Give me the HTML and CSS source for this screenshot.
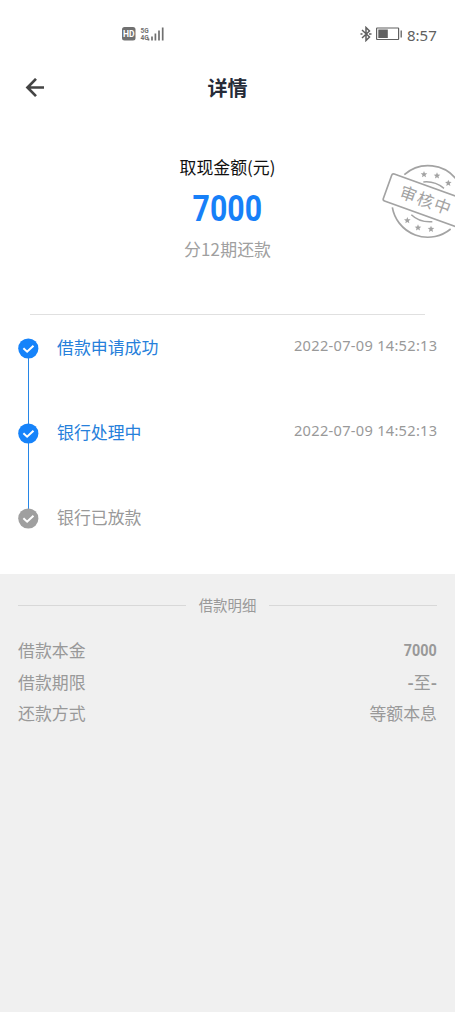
FILE: index.html
```html
<!DOCTYPE html>
<html lang="zh-CN">
<head>
<meta charset="utf-8">
<meta name="viewport" content="width=device-width">
<title>详情</title>
<link rel="stylesheet" href="styles.css">
</head>
<body>
<header class="status">
  <svg class="status-signal" width="44" height="16" viewBox="0 0 44 16">
    <rect x="0" y="1" width="13.500" height="13.500" rx="2.500" fill="#707070"/>
    <text x="6.700" y="11" class="hd" text-anchor="middle">HD</text>
    <text x="18.500" y="6.700" class="net">5G</text>
    <text x="18.500" y="13.800" class="net">4G</text>
    <path d="M26.500 12.500v2M30 10.500v4M33.400 7.500v7M37 4.500v10M40.700 1.500v13" stroke="#707070" stroke-width="1.700" fill="none"/>
  </svg>
  <div class="status-right">
    <svg width="44" height="16" viewBox="0 0 44 16" fill="none" stroke="#606060">
      <path d="M2 4l7.500 7-3.500 3.500v-13l3.500 3.500-7.500 7M.5 8h2M9 8h2.500" stroke-width="1.500"/>
      <rect x="16.600" y="2" width="22" height="11.500" rx=".5" stroke-width="1.200"/>
      <rect x="18.300" y="3.500" width="9.500" height="8.500" fill="#606060" stroke="none"/>
      <path d="M41.200 4.500v7" stroke-width="1.300"/>
    </svg>
    <span class="clock">8:57</span>
  </div>
</header>
<nav class="nav">
  <svg class="back" width="20" height="20" viewBox="0 0 20 20" fill="none" stroke="#444" stroke-width="2.700"><path d="M19 9.500H3M11 .9L2.500 9.500l8.500 8.600"/></svg>
  <h1 class="title">详情</h1>
</nav>
<main>
  <section class="hero">
    <p class="label">取现金额(元)</p>
    <p class="amount"><span>7000</span></p>
    <p class="terms">分<span class="terms-num">12</span>期还款</p>
    <svg class="stamp" width="85" height="100" viewBox="0 0 255 300" fill="none" stroke="#a3a3a3" stroke-width="5">
      <defs><path id="star" d="M0-10l2.700 6.600 7.200.5-5.500 4.600 1.700 7L0 5l-6.100 3.700 1.700-7-5.500-4.600 7.200-.5z" fill="#a3a3a3" stroke="none"/></defs>
      <path d="M103 74A108 108 0 0 1 262 92M67 172A108 108 0 0 0 242 237"/>
      <path d="M160 96Q193 92 222 115M124 194Q149 218 187 215" stroke-width="4.500"/>
      <rect x="-128" y="-43" width="256" height="86" rx="6" transform="translate(173 154) rotate(19.800)"/>
      <use href="#star" x="162" y="73"/><use href="#star" x="201" y="77"/><use href="#star" x="235" y="99"/>
      <use href="#star" x="112" y="211"/><use href="#star" x="144" y="233"/><use href="#star" x="183" y="237"/>
      <text class="stamp-text" transform="translate(166 151) rotate(19.800)" x="-79" y="18">审核中</text>
    </svg>
  </section>
  <ol class="steps">
    <li class="step done">
      <svg class="dot" width="21" height="21" viewBox="0 0 21 21"><circle cx="10.300" cy="10.500" r="10.100"/><path d="M5.400 10.300l3.700 3.400 6.400-6"/></svg>
      <span class="name">借款申请成功</span><time class="time">2022-07-09 14:52:13</time>
    </li>
    <li class="step done">
      <svg class="dot" width="21" height="21" viewBox="0 0 21 21"><circle cx="10.300" cy="10.500" r="10.100"/><path d="M5.400 10.300l3.700 3.400 6.400-6"/></svg>
      <span class="name">银行处理中</span><time class="time">2022-07-09 14:52:13</time>
    </li>
    <li class="step">
      <svg class="dot" width="21" height="21" viewBox="0 0 21 21"><circle cx="10.300" cy="10.500" r="10.100"/><path d="M5.400 10.300l3.700 3.400 6.400-6"/></svg>
      <span class="name">银行已放款</span>
    </li>
  </ol>
  <section class="details">
    <h2 class="divider"><span>借款明细</span></h2>
    <dl class="rows">
      <div class="row"><dt>借款本金</dt><dd class="number">7000</dd></div>
      <div class="row"><dt>借款期限</dt><dd><b>-</b>至<b>-</b></dd></div>
      <div class="row"><dt>还款方式</dt><dd>等额本息</dd></div>
    </dl>
  </section>
</main>
</body>
</html>
```
FILE: styles.css
```css
* { box-sizing: border-box; margin: 0; padding: 0; }
body {
  min-height: 1012px;
  display: flex;
  flex-direction: column;
  background: #fff;
  color: #999;
  font-family: "Noto Sans CJK SC", sans-serif;
  font-size: 16.9px;
  overflow-x: hidden;
}
svg { display: block; flex: none; }
.status {
  height: 68px;
  display: flex;
  justify-content: space-between;
  align-items: center;
  padding: 0 18px 0 122px;
}
.hd { font: bold 8.5px Roboto, sans-serif; fill: #fff; }
.net { font: bold 6.5px Roboto, sans-serif; fill: #707070; }
.status-right { display: flex; align-items: center; gap: 4px; }
.status-right svg { margin-right: -1px; }
.clock { font: 15px/20px "Noto Sans", sans-serif; color: #606060; width: 30px; padding-top: 1px; white-space: nowrap; }
.nav {
  height: 40px;
  display: grid;
  grid-template-columns: 1fr auto 1fr;
  align-items: center;
}
.back { margin-left: 25px; }
.title { font-size: 20px; line-height: 30px; font-weight: 700; color: #262b38; }
main { flex: 1; display: flex; flex-direction: column; }
.hero {
  position: relative;
  height: 207px;
  margin: 0 30px;
  padding-top: 46px;
  border-bottom: 1px solid #e0e0e0;
  text-align: center;
}
.label { color: #111; line-height: 26px; }
.amount { height: 56px; font: bold 36px/58px Roboto, sans-serif; color: #1780f8; }
.amount span { display: inline-block; transform: scaleX(.84); }
.terms { line-height: 26px; color: #a0a0a0; }
.terms-num { letter-spacing: .3px; }
.stamp { position: absolute; top: 42px; right: -30px; }
.stamp-text { font: 50px "Noto Sans CJK SC", sans-serif; letter-spacing: 4px; fill: #a3a3a3; stroke: none; }
.steps { list-style: none; padding: 22px 18px 0; height: 259px; }
.step {
  position: relative;
  height: 85px;
  display: flex;
  align-items: flex-start;
}
.dot { margin-top: 1px; fill: #9f9f9f; }
.dot path { fill: none; stroke: #fff; stroke-width: 2; }
.done .dot { fill: #1683fa; }
.done::after {
  content: "";
  position: absolute;
  left: 10px;
  top: 21px;
  width: 1px;
  height: 66px;
  background: #2786e6;
}
.name { margin-left: 18px; line-height: 20px; }
.done .name { color: #2680db; }
.time { margin-left: auto; margin-right: -.4px; font: 14.6px/17px "Noto Sans", sans-serif; letter-spacing: .29px; color: #999; }
.details { flex: 1; background: #f0f0f0; padding: 19px 18px; }
.divider {
  display: flex;
  align-items: center;
  gap: 13px;
  height: 24px;
  font-size: 14.4px;
  line-height: 20px;
  font-weight: 400;
}
.divider span { margin-top: -1px; }
.divider::before, .divider::after { content: ""; flex: 1; height: 1px; background: #d8d8d8; }
.rows { padding-top: 17px; }
.row { display: flex; justify-content: space-between; height: 31.5px; line-height: 31px; }
.number { padding-top: 1px; font-family: Roboto, sans-serif; font-weight: 700; transform: scaleX(.85); transform-origin: right; }
```
